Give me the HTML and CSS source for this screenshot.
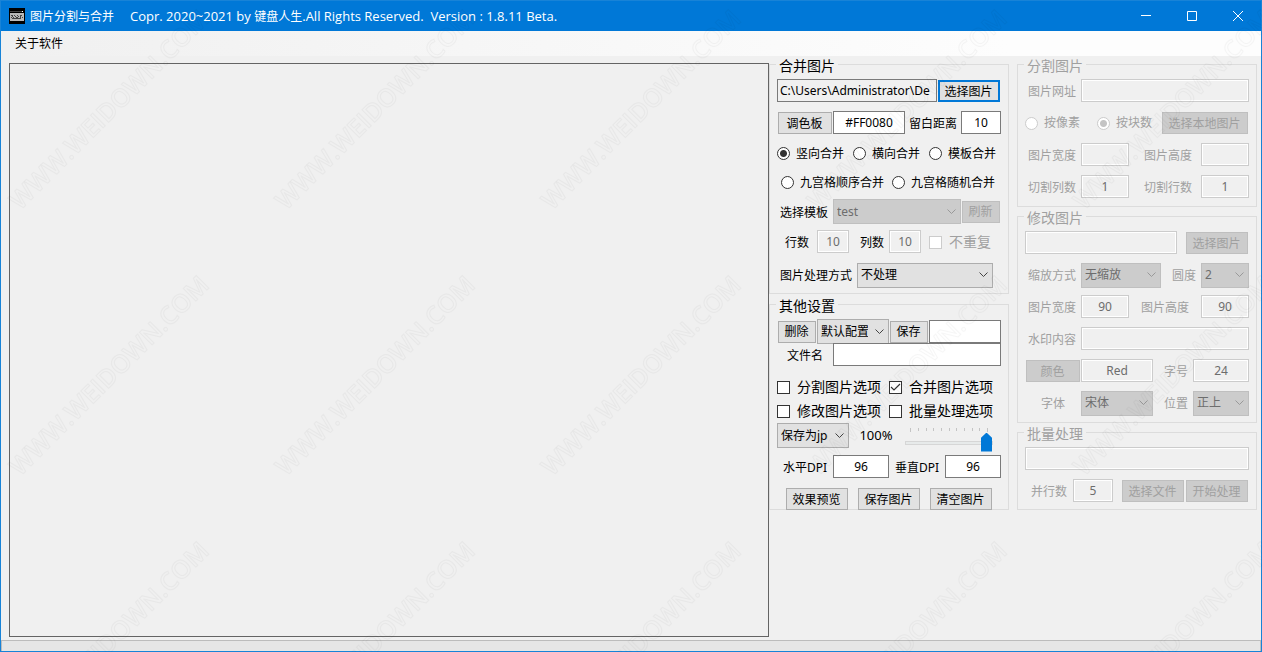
FILE: index.html
```
<!DOCTYPE html>
<html lang="zh-CN">
<head>
<meta charset="utf-8">
<title>图片分割与合并</title>
<link rel="stylesheet" href="styles.css">
</head>
<body>
<div class="window">
  <header class="titlebar">
    <svg class="app-icon" viewBox="0 0 16 16" aria-hidden="true">
      <rect width="16" height="16" fill="#000"/>
      <path d="M1 3.5h12" stroke="#444"/><rect x="13" y="3" width="1" height="1" fill="#fff"/>
      <rect x="1" y="5" width="14" height="8" fill="#b9b9b9"/>
      <path d="M2 7.500h2m1 0h1m2 0h1m2 0h2M3 8.500h1m2 0h1m2 0h1m1 0h1M2 9.500h1m1 0h1m2 0h2m2 0h1m1 0h1M3 10.500h9" stroke="#444"/>
    </svg>
    <h1 class="title">图片分割与合并<span class="title-info"><span class="latin">Copr. 2020~2021 by </span>键盘人生<span class="latin">.All Rights Reserved.&nbsp; Version : 1.8.11 Beta.</span></span></h1>
    <div class="caption-buttons">
      <button class="caption" aria-label="最小化"><svg viewBox="0 0 10 10"><path d="M0 4.500h10"/></svg></button>
      <button class="caption" aria-label="最大化"><svg viewBox="0 0 10 10"><path d="M.5.5h9v9h-9z"/></svg></button>
      <button class="caption" aria-label="关闭"><svg viewBox="0 0 10 10"><path d="M0 0l10 10M10 0L0 10"/></svg></button>
    </div>
  </header>
  <nav class="menubar"><button class="menu-item">关于软件</button></nav>

  <main class="workspace">
    <section class="preview" aria-label="图片预览"></section>

    <div class="column">
      <fieldset class="group group-merge">
        <legend>合并图片</legend>
        <div class="row">
          <input class="s20 path" type="text" value="C:\Users\Administrator\De" aria-label="图片路径" readonly>
          <button class="s8 focused">选择图片</button>
        </div>
        <div class="row">
          <button class="s7">调色板</button>
          <input class="s9" type="text" value="#FF0080" aria-label="颜色值">
          <label class="s7" for="gap">留白距离</label>
          <input class="s5" id="gap" type="text" value="10">
        </div>
        <div class="choices">
          <label><input type="radio" name="mode" checked>竖向合并</label>
          <label><input type="radio" name="mode">横向合并</label>
          <label><input type="radio" name="mode">模板合并</label>
        </div>
        <div class="choices indent">
          <label><input type="radio" name="mode">九宫格顺序合并</label>
          <label><input type="radio" name="mode">九宫格随机合并</label>
        </div>
        <div class="row row-tight">
          <label class="s7 near" for="tpl">选择模板</label>
          <select class="s16" id="tpl" disabled><option>test</option></select>
          <button class="s5" disabled>刷新</button>
        </div>
        <div class="row">
          <label class="s5" for="rows">行数</label>
          <input class="s4" id="rows" type="text" value="10" disabled>
          <label class="s5 end" for="cols">列数</label>
          <input class="s4" id="cols" type="text" value="10" disabled>
          <label class="s10 check inset off"><input type="checkbox" disabled>不重复</label>
        </div>
        <div class="row row-tall">
          <label class="s10 near" for="proc">图片处理方式</label>
          <select class="s17" id="proc"><option>不处理</option></select>
        </div>
      </fieldset>

      <fieldset class="group group-other">
        <legend>其他设置</legend>
        <div class="row">
          <button class="s5">删除</button>
          <select class="s9" aria-label="配置"><option>默认配置</option></select>
          <button class="s5">保存</button>
          <input class="s9" type="text" aria-label="配置名">
        </div>
        <div class="row">
          <label class="s7" for="fname">文件名</label>
          <input class="s21" id="fname" type="text">
        </div>
        <div class="row spaced">
          <label class="s14 check"><input type="checkbox">分割图片选项</label>
          <label class="s14 check"><input type="checkbox" checked>合并图片选项</label>
        </div>
        <div class="row">
          <label class="s14 check"><input type="checkbox">修改图片选项</label>
          <label class="s14 check"><input type="checkbox">批量处理选项</label>
        </div>
        <div class="row row-save">
          <select class="s9" aria-label="保存格式"><option>保存为jpg</option></select>
          <label class="s7 percent" for="quality">100%</label>
          <div class="s11 slider">
            <svg class="ticks" viewBox="0 0 78 4" aria-hidden="true"><path d="M.5 0v4M8.500 0v3M16.500 0v3M23.500 0v3M31.500 0v3M39.500 0v3M46.500 0v3M54.500 0v3M62.500 0v3M69.500 0v3M77.500 0v4"/></svg>
            <input id="quality" type="range" min="0" max="100" value="100">
          </div>
        </div>
        <div class="row row-dpi">
          <label class="s7" for="hdpi">水平DPI</label>
          <input class="s7" id="hdpi" type="text" value="96">
          <label class="s7" for="vdpi">垂直DPI</label>
          <input class="s7" id="vdpi" type="text" value="96">
        </div>
        <div class="actions">
          <button>效果预览</button>
          <button>保存图片</button>
          <button>清空图片</button>
        </div>
      </fieldset>
    </div>

    <div class="column">
      <fieldset class="group" disabled>
        <legend>分割图片</legend>
        <div class="row">
          <label class="s7 near" for="url">图片网址</label>
          <input class="s21" id="url" type="text">
        </div>
        <div class="row">
          <label class="s9 radio"><input type="radio" name="split">按像素</label>
          <label class="s8 radio"><input type="radio" name="split" checked>按块数</label>
          <button class="s11">选择本地图片</button>
        </div>
        <div class="row">
          <label class="s7 near" for="sw">图片宽度</label>
          <input class="s6" id="sw" type="text">
          <label class="s9 end far" for="sh">图片高度</label>
          <input class="s6" id="sh" type="text">
        </div>
        <div class="row">
          <label class="s7 near" for="sc">切割列数</label>
          <input class="s6" id="sc" type="text" value="1">
          <label class="s9 end far" for="sr">切割行数</label>
          <input class="s6" id="sr" type="text" value="1">
        </div>
      </fieldset>

      <fieldset class="group" disabled>
        <legend>修改图片</legend>
        <div class="row">
          <input class="s19" type="text" aria-label="图片路径">
          <span class="s1"></span>
          <button class="s8">选择图片</button>
        </div>
        <div class="row">
          <label class="s7 near" for="zoom">缩放方式</label>
          <select class="s10" id="zoom"><option>无缩放</option></select>
          <label class="s5 end" for="round">圆度</label>
          <select class="s6" id="round"><option>2</option></select>
        </div>
        <div class="row">
          <label class="s7 near" for="mw">图片宽度</label>
          <input class="s6" id="mw" type="text" value="90">
          <label class="s9" for="mh">图片高度</label>
          <input class="s6" id="mh" type="text" value="90">
        </div>
        <div class="row">
          <label class="s7 near" for="mark">水印内容</label>
          <input class="s21" id="mark" type="text">
        </div>
        <div class="row">
          <button class="s7">颜色</button>
          <input class="s9" type="text" value="Red" aria-label="颜色">
          <label class="s5 end" for="size">字号</label>
          <input class="s7" id="size" type="text" value="24">
        </div>
        <div class="row">
          <label class="s7" for="font">字体</label>
          <select class="s9" id="font"><option>宋体</option></select>
          <label class="s5 end" for="pos">位置</label>
          <select class="s7" id="pos"><option>正上</option></select>
        </div>
      </fieldset>

      <fieldset class="group group-batch" disabled>
        <legend>批量处理</legend>
        <div class="row">
          <input class="s28" type="text" aria-label="文件">
        </div>
        <div class="row">
          <label class="s6" for="par">并行数</label>
          <input class="s5" id="par" type="text" value="5">
          <span class="s1"></span>
          <button class="s8">选择文件</button>
          <button class="s8">开始处理</button>
        </div>
      </fieldset>
    </div>
  </main>

  <footer class="statusbar"></footer>

  <svg class="watermark" aria-hidden="true">
    <defs>
      <pattern id="mark-tile" width="266" height="266" patternUnits="userSpaceOnUse">
        <text class="mark-text" transform="translate(20 211) rotate(-45)">WWW.WEIDOWN.COM</text>
      </pattern>
    </defs>
    <rect width="100%" height="100%" fill="url(#mark-tile)"/>
  </svg>
</div>
</body>
</html>
```
FILE: styles.css
```
* { box-sizing: border-box; }

body {
  margin: 0;
  font: 12px/16px "Noto Sans", "Noto Sans CJK SC", sans-serif;
  color: #000;
}

button, input, select { font: inherit; color: inherit; margin: 0; }

.window {
  position: relative;
  display: flex;
  flex-direction: column;
  min-height: 100vh;
  background: #f0f0f0;
  border: 1px solid #1883d7;
}

/* Title bar and menu */
.titlebar {
  display: flex;
  align-items: center;
  height: 30px;
  padding-left: 8px;
  background: #0078d7;
  color: #fff;
}
.app-icon { width: 16px; height: 16px; margin-right: 5px; }
.title { flex: 1; margin: 0; font-size: 12px; font-weight: 400; white-space: nowrap; }
.title-info { margin-left: 16px; }
.latin { font-family: "Open Sans", sans-serif; font-size: 13px; }
.caption-buttons { display: flex; }
.caption {
  width: 46px;
  height: 30px;
  padding: 0;
  border: 0;
  background: none;
}
.caption svg { width: 10px; height: 10px; display: block; margin: auto; overflow: visible; }
.caption path { fill: none; stroke: #fff; }
.menubar {
  height: 25px;
  padding: 0 8px;
  background: linear-gradient(to right, #f0f0f0, #fdfdfd 80%);
}
.menu-item { height: 25px; padding: 0 6px; border: 0; background: none; }

/* Workspace */
.workspace { flex: 1; display: flex; padding-right: 4px; }
.preview { flex: 1; margin: 7px 0 3px 8px; border: 1px solid #646464; }
.column { width: 240px; display: flex; flex-direction: column; gap: 1px; }
.column + .column { margin-left: 8px; }

.group {
  min-width: 0;
  margin: 0;
  padding: 2px 7px 3px;
  border: 1px solid #dcdcdc;
}
.group legend {
  padding: 3px 3px 0;
  margin-left: -1px;
  font-size: 14px;
  line-height: 14px;
}
.group-merge { padding-bottom: 1px; }
.group-other { padding-top: 6px; padding-bottom: 0; margin-top: 1px; }
.group-batch { padding-bottom: 2px; }

.row {
  display: grid;
  grid-template-columns: repeat(28, 1fr);
  align-items: center;
  height: 32px;
}
.row-tight { height: 29px; }
.row-tall { height: 34px; }
.group-other .row { height: 24px; }
.group-other .spaced { margin-top: 8px; }
.group-other .row-save { height: 28px; align-items: start; }
.group-other .row-dpi { height: 32px; }

.s1 { grid-column: span 1; }
.s4 { grid-column: span 4; }
.s5 { grid-column: span 5; }
.s6 { grid-column: span 6; }
.s7 { grid-column: span 7; }
.s8 { grid-column: span 8; }
.s9 { grid-column: span 9; }
.s10 { grid-column: span 10; }
.s11 { grid-column: span 11; }
.s14 { grid-column: span 14; }
.s16 { grid-column: span 16; }
.s17 { grid-column: span 17; }
.s19 { grid-column: span 19; }
.s20 { grid-column: span 20; }
.s21 { grid-column: span 21; }
.s28 { grid-column: span 28; }

.row label { padding-top: 2px; text-align: center; white-space: nowrap; }
.row .near { text-align: left; padding-left: 3px; }
.row .end { text-align: right; padding-right: 5px; }
.row .far { padding-right: 9px; }

/* Fields */
input[type="text"] {
  width: 100%;
  min-width: 0;
  height: 23px;
  margin-bottom: 1px;
  padding: 0 1px;
  border: 1px solid #7a7a7a;
  background: #fff;
  text-align: center;
}
input.path { background: #f0f0f0; text-align: left; padding: 0 2px; }
input[type="text"]:disabled {
  border-color: #ccc;
  background: #f0f0f0;
  box-shadow: inset 0 0 0 1px #fff;
  color: #6d6d6d;
}

select {
  appearance: none;
  width: 100%;
  min-width: 0;
  height: 25px;
  padding: 0 20px 0 3px;
  border: 1px solid #adadad;
  border-radius: 0;
  background: #e1e1e1 url("data:image/svg+xml,%3Csvg xmlns='http://www.w3.org/2000/svg' width='9' height='6'%3E%3Cpath d='M.5.5l4 4 4-4' fill='none' stroke='%23444'/%3E%3C/svg%3E") no-repeat right 4px center;
}
select:disabled {
  opacity: 1;
  color: #6d6d6d;
  border-color: #bfbfbf;
  background: #ccc url("data:image/svg+xml,%3Csvg xmlns='http://www.w3.org/2000/svg' width='9' height='6'%3E%3Cpath d='M.5.5l4 4 4-4' fill='none' stroke='%23999'/%3E%3C/svg%3E") no-repeat right 4px center;
}

.group button {
  height: 22px;
  margin: 0 1px;
  padding: 1px 1px 0 0;
  border: 1px solid #adadad;
  background: #e1e1e1;
  white-space: nowrap;
}
.group .focused { border: 2px solid #0078d7; }
.group button:disabled { color: #a0a0a0; background: #ccc; border-color: #bfbfbf; }

/* Radios and tick boxes */
input[type="radio"], input[type="checkbox"] {
  appearance: none;
  flex: none;
  width: 13px;
  height: 13px;
  border: 1px solid #333;
  background: #fff;
}
input[type="radio"] { border-radius: 50%; }
input[type="radio"]:checked { background: radial-gradient(circle, #333 3px, #fff 4px); }
input[type="checkbox"]:checked {
  background: #fff url("data:image/svg+xml,%3Csvg xmlns='http://www.w3.org/2000/svg' width='11' height='11'%3E%3Cpath d='M1 5l3 3 6-6' fill='none' stroke='%23333' stroke-width='1.200'/%3E%3C/svg%3E") center no-repeat;
}
input[type="radio"]:disabled, input[type="checkbox"]:disabled { border-color: #ccc; }
input[type="radio"]:checked:disabled { background: radial-gradient(circle, #c4c4c4 3px, #fff 4px); }

.choices { display: flex; align-items: center; gap: 9px; height: 29px; }
.choices label, .row .radio, .row .check { display: flex; align-items: center; gap: 6px; padding-top: 0; white-space: nowrap; }
.indent { padding-left: 4px; gap: 8px; }
.row .check { font-size: 14px; gap: 7px; }
.row .inset { padding-left: 8px; }

.off, .group:disabled legend, .group:disabled label { color: #a0a0a0; }

/* Quality slider */
.row .percent { padding: 0 2px 0 0; font-size: 13px; line-height: 25px; }
.row .slider { padding-top: 5px; }
.ticks { display: block; width: 78px; height: 4px; margin: 0 0 1px 5px; }
.ticks path { stroke: #c4c4c4; }
.slider input {
  appearance: none;
  display: block;
  width: 100%;
  height: 19px;
  background: linear-gradient(#e7eaea, #e7eaea) center / 100% 4px no-repeat;
}
.slider input::-webkit-slider-runnable-track {
  height: 4px;
  border: 1px solid #d6d6d6;
}
.slider input::-webkit-slider-thumb {
  appearance: none;
  width: 11px;
  height: 19px;
  margin-top: -9px;
  background: #0078d7;
  clip-path: polygon(50% 0, 100% 28%, 100% 100%, 0 100%, 0 28%);
}

.actions {
  display: grid;
  grid-template-columns: repeat(3, 1fr);
  gap: 8px;
  margin: 5px 8px -1px;
}

/* Status bar */
.statusbar { height: 11px; background: #e6e6e6; border: 1px solid #bcbcbc; border-bottom: 0; }

/* Site watermark, tiled over the whole window */
.watermark {
  position: absolute;
  inset: -1px;
  width: calc(100% + 2px);
  height: calc(100% + 2px);
  pointer-events: none;
}
.mark-text {
  font: 600 25px "Open Sans", sans-serif;
  fill: none;
  stroke: #000;
  stroke-opacity: 0.035;
  stroke-width: 1px;
}
```
